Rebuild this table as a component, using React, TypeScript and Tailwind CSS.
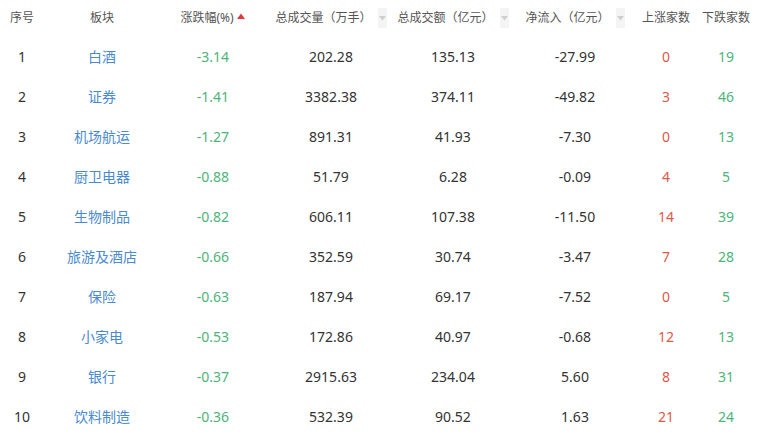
import React from "react";

type Row = {
    idx: number;
    name: string;
    change: string;
    vol: string;
    amount: string;
    flow: string;
    up: number;
    down: number;
};

const rows: Row[] = [
    { idx: 1, name: "白酒", change: "-3.14", vol: "202.28", amount: "135.13", flow: "-27.99", up: 0, down: 19 },
    { idx: 2, name: "证券", change: "-1.41", vol: "3382.38", amount: "374.11", flow: "-49.82", up: 3, down: 46 },
    { idx: 3, name: "机场航运", change: "-1.27", vol: "891.31", amount: "41.93", flow: "-7.30", up: 0, down: 13 },
    { idx: 4, name: "厨卫电器", change: "-0.88", vol: "51.79", amount: "6.28", flow: "-0.09", up: 4, down: 5 },
    { idx: 5, name: "生物制品", change: "-0.82", vol: "606.11", amount: "107.38", flow: "-11.50", up: 14, down: 39 },
    { idx: 6, name: "旅游及酒店", change: "-0.66", vol: "352.59", amount: "30.74", flow: "-3.47", up: 7, down: 28 },
    { idx: 7, name: "保险", change: "-0.63", vol: "187.94", amount: "69.17", flow: "-7.52", up: 0, down: 5 },
    { idx: 8, name: "小家电", change: "-0.53", vol: "172.86", amount: "40.97", flow: "-0.68", up: 12, down: 13 },
    { idx: 9, name: "银行", change: "-0.37", vol: "2915.63", amount: "234.04", flow: "5.60", up: 8, down: 31 },
    { idx: 10, name: "饮料制造", change: "-0.36", vol: "532.39", amount: "90.52", flow: "1.63", up: 21, down: 24 },
];

const cols = "grid grid-cols-[44px_116px_106px_130px_114px_130px_52px_68px]";

function SortIdle() {
    return (
        <span className="ml-[6px] inline-flex h-[20px] w-[9px] items-center justify-center bg-[#f4f4f4]">
            <svg width="7" height="5" viewBox="0 0 7 5">
                <path d="M0 0 L7 0 L3.5 4.5 Z" fill="#cfcfcf" />
            </svg>
        </span>
    );
}

function SortUp() {
    return (
        <span className="ml-[3px] inline-flex h-[20px] w-[9px] items-center justify-center">
            <svg width="8" height="6" viewBox="0 0 8 6" className="-mt-[5px]">
                <path d="M0 6 L8 6 L4 0.5 Z" fill="#e2393c" />
            </svg>
        </span>
    );
}

export default function App() {
    return (
        <div
            className="w-[771px] h-[438px] bg-white text-[#333]"
            style={{ fontFamily: '"Noto Sans", "Noto Sans CJK SC", sans-serif' }}
        >
            <div className={`${cols} h-[36px] items-center text-[12px] text-[#555]`}>
                <div className="text-center">序号</div>
                <div className="text-center">板块</div>
                <div className="flex items-center justify-center">
                    涨跌幅(%)
                    <SortUp />
                </div>
                <div className="flex items-center justify-center">
                    总成交量（万手）
                    <SortIdle />
                </div>
                <div className="flex items-center justify-center">
                    总成交额（亿元）
                    <SortIdle />
                </div>
                <div className="flex items-center justify-center">
                    净流入（亿元）
                    <SortIdle />
                </div>
                <div className="text-center">上涨家数</div>
                <div className="text-center">下跌家数</div>
            </div>
            {rows.map((r) => (
                <div key={r.idx} className={`${cols} h-[40px] items-center text-[14px]`}>
                    <div className="text-center">{r.idx}</div>
                    <div className="text-center text-[#4a8ad0]">{r.name}</div>
                    <div className="text-center text-[#4db47a]">{r.change}</div>
                    <div className="text-center">{r.vol}</div>
                    <div className="text-center">{r.amount}</div>
                    <div className="text-center">{r.flow}</div>
                    <div className="text-center text-[#e0584a]">{r.up}</div>
                    <div className="text-center text-[#4db47a]">{r.down}</div>
                </div>
            ))}
        </div>
    );
}
